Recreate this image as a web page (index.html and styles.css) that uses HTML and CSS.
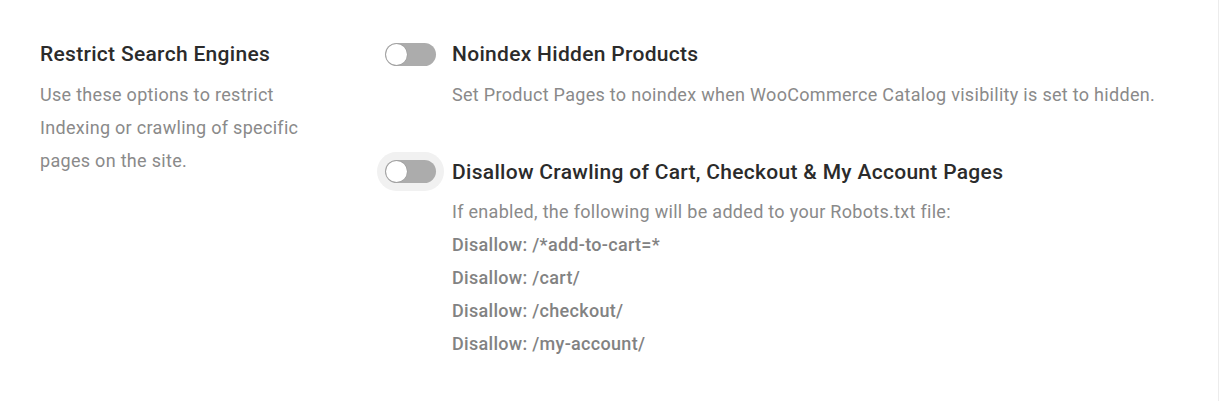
FILE: index.html
```html
<!DOCTYPE html>
<html>
<head>
<meta charset="utf-8">
<link rel="stylesheet" href="styles.css">
</head>
<body>
<div class="page">
  <section class="setting">
    <div class="intro">
      <h2 class="intro-title">Restrict Search Engines</h2>
      <p class="intro-desc">Use these options to restrict Indexing or crawling of specific pages on the site.</p>
    </div>
    <div class="options">
      <div class="option">
        <div class="option-head">
          <span class="toggle"><span class="knob"></span></span>
          <span class="option-title">Noindex Hidden Products</span>
        </div>
        <p class="option-desc">Set Product Pages to noindex when WooCommerce Catalog visibility is set to hidden.</p>
      </div>
      <div class="option">
        <div class="option-head">
          <span class="toggle focused"><span class="knob"></span></span>
          <span class="option-title">Disallow Crawling of Cart, Checkout &amp; My Account Pages</span>
        </div>
        <div class="option-desc">
          <div>If enabled, the following will be added to your Robots.txt file:</div>
          <div class="rule">Disallow: /*add-to-cart=*</div>
          <div class="rule">Disallow: /cart/</div>
          <div class="rule">Disallow: /checkout/</div>
          <div class="rule">Disallow: /my-account/</div>
        </div>
      </div>
    </div>
  </section>
</div>
</body>
</html>
```

FILE: styles.css
```css
html, body {
  margin: 0;
  padding: 0;
  background: #ffffff;
}
body {
  font-family: Roboto, "Liberation Sans", Arial, sans-serif;
  height: 401px;
  overflow: hidden;
}
.page {
  width: 1218px;
  height: 401px;
  border-right: 1px solid #ececec;
  box-sizing: content-box;
}
.setting {
  display: flex;
  padding: 40px 0 0 40px;
}
.intro {
  width: 345px;
  flex: none;
}
.intro-title {
  margin: 0;
  font-size: 21px;
  font-weight: 500;
  letter-spacing: 0.3px;
  line-height: 28px;
  color: #2b2b2b;
}
.intro-desc {
  margin: 9.5px 0 0;
  width: 268px;
  font-size: 18px;
  letter-spacing: 0.3px;
  line-height: 33px;
  color: #8a8a8a;
}
.options {
  display: flex;
  flex-direction: column;
  gap: 47px;
}
.option-head {
  display: flex;
  align-items: center;
  gap: 16px;
  height: 28px;
}
.toggle {
  position: relative;
  width: 51px;
  height: 23px;
  border-radius: 12px;
  background: #acacac;
  flex: none;
}
.toggle.focused {
  box-shadow: 0 0 0 8px #f1f1f1;
}
.knob {
  position: absolute;
  left: 1px;
  top: 1px;
  width: 21px;
  height: 21px;
  border-radius: 50%;
  background: #fff;
  box-shadow: 0 0 0 0.5px #9a9a9a;
}
.option-title {
  font-size: 21px;
  font-weight: 500;
  letter-spacing: 0.3px;
  color: #2b2b2b;
  line-height: 28px;
}
.option-desc {
  margin: 9.5px 0 0 67px;
  font-size: 18px;
  letter-spacing: 0.3px;
  line-height: 33px;
  color: #8a8a8a;
}
.rule {
  font-weight: 500;
  color: #828282;
}
```
